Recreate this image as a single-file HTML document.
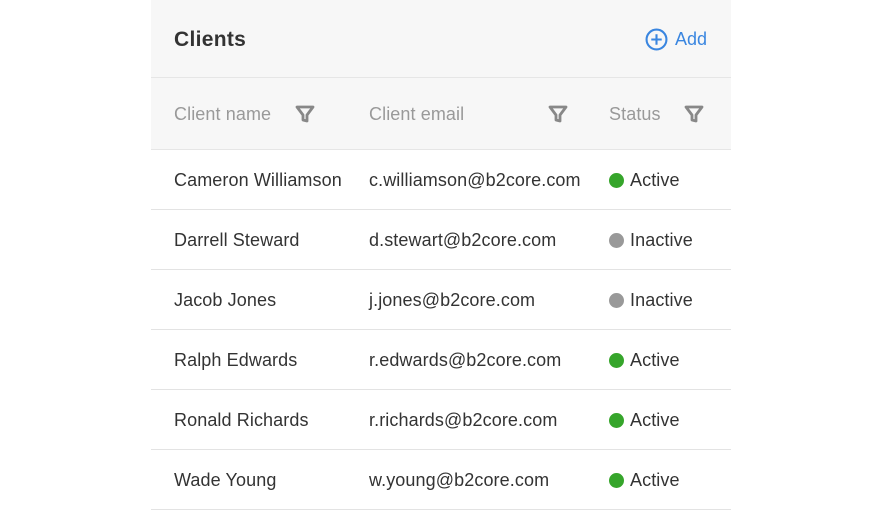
<!DOCTYPE html>
<html><head><style>
body{margin:0;width:882px;height:510px;background:#fff;font-family:"Liberation Sans",sans-serif;position:relative;overflow:hidden}
.p{position:absolute;left:151px;width:580px;top:0}
.hd{height:77px;background:#f7f7f7;border-bottom:1px solid #e6e6e6;position:relative}
.hd .t{position:absolute;left:23px;top:28px;font-size:21px;font-weight:bold;color:#333;letter-spacing:0.3px}
.hd .a{position:absolute;right:24px;top:28px;font-size:18px;color:#3a86e0;display:flex;align-items:center;gap:7px}
.th{height:71px;background:#f7f7f7;border-bottom:1px solid #e6e6e6;position:relative;color:#999;font-size:18px;letter-spacing:0.1px}
.th span,.r span{position:absolute}
.r{height:59px;border-bottom:1px solid #e3e3e3;position:relative;font-size:18px;color:#333;letter-spacing:0.1px}
.f{position:absolute;top:26px}
.d{display:inline-block;width:15px;height:15px;border-radius:50%;margin-right:6px;vertical-align:-2px}
</style></head><body>
<div class="p">
<div class="hd"><div class="t">Clients</div><div class="a"><svg width="23" height="23" viewBox="0 0 22 22"><circle cx="11" cy="11" r="9.5" fill="none" stroke="#3a86e0" stroke-width="2"/><path d="M11 6v10M6 11h10" stroke="#3a86e0" stroke-width="2"/></svg>Add</div></div>
<div class="th">
<span style="left:23px;top:26px">Client name</span>
<span style="left:218px;top:26px">Client email</span>
<span style="left:458px;top:26px">Status</span>
<svg class="f" style="left:144px" width="20" height="20" viewBox="0 0 20 20"><path d="M2 3h16l-6 8v6l-4-1v-5z" fill="none" stroke="#888" stroke-width="2.8" stroke-linejoin="round"/></svg>
<svg class="f" style="left:397px" width="20" height="20" viewBox="0 0 20 20"><path d="M2 3h16l-6 8v6l-4-1v-5z" fill="none" stroke="#888" stroke-width="2.8" stroke-linejoin="round"/></svg>
<svg class="f" style="left:533px" width="20" height="20" viewBox="0 0 20 20"><path d="M2 3h16l-6 8v6l-4-1v-5z" fill="none" stroke="#888" stroke-width="2.8" stroke-linejoin="round"/></svg>
</div>
<div class="r"><span style="left:23px;top:20px">Cameron Williamson</span><span style="left:218px;top:20px">c.williamson@b2core.com</span><span style="left:458px;top:20px"><i class="d" style="background:#36a52b"></i>Active</span></div>
<div class="r"><span style="left:23px;top:20px">Darrell Steward</span><span style="left:218px;top:20px">d.stewart@b2core.com</span><span style="left:458px;top:20px"><i class="d" style="background:#999"></i>Inactive</span></div>
<div class="r"><span style="left:23px;top:20px">Jacob Jones</span><span style="left:218px;top:20px">j.jones@b2core.com</span><span style="left:458px;top:20px"><i class="d" style="background:#999"></i>Inactive</span></div>
<div class="r"><span style="left:23px;top:20px">Ralph Edwards</span><span style="left:218px;top:20px">r.edwards@b2core.com</span><span style="left:458px;top:20px"><i class="d" style="background:#36a52b"></i>Active</span></div>
<div class="r"><span style="left:23px;top:20px">Ronald Richards</span><span style="left:218px;top:20px">r.richards@b2core.com</span><span style="left:458px;top:20px"><i class="d" style="background:#36a52b"></i>Active</span></div>
<div class="r"><span style="left:23px;top:20px">Wade Young</span><span style="left:218px;top:20px">w.young@b2core.com</span><span style="left:458px;top:20px"><i class="d" style="background:#36a52b"></i>Active</span></div>
</div>
</body></html>
